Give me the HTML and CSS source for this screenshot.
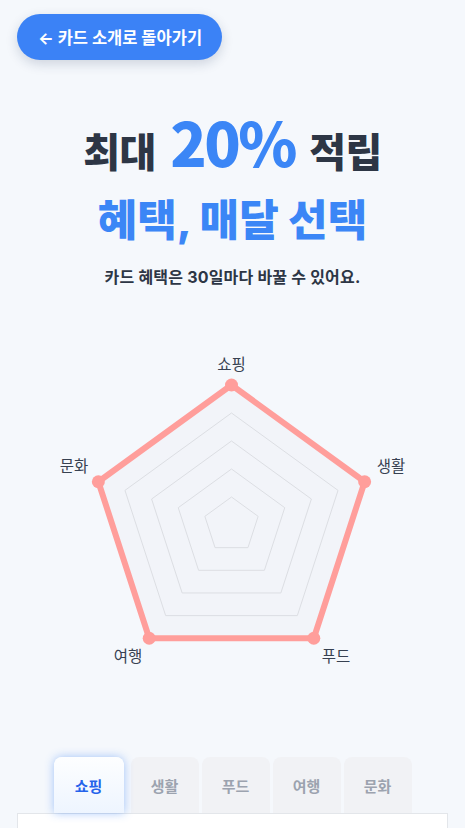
FILE: index.html
```html
<!DOCTYPE html>
<html lang="ko">
<head>
<meta charset="utf-8">
<link rel="stylesheet" href="styles.css">
</head>
<body>
<div class="page">
  <div class="top">
    <button class="back">← 카드 소개로 돌아가기</button>
  </div>
  <section class="hero">
    <h1 class="title">최대 <span class="pct">20%</span> 적립</h1>
    <h2 class="sub">혜택, 매달 선택</h2>
    <p class="desc">카드 혜택은 30일마다 바꿀 수 있어요.</p>
  </section>
  <div class="chart">
    <svg class="radar" width="465" height="360" viewBox="0 0 465 360">
      <polygon class="ring outer" points="231.5,46 364.65,142.74 313.79,299.26 149.21,299.26 98.35,142.74"/>
      <polygon class="ring" points="231.5,74 338.02,151.39 297.33,276.61 165.67,276.61 124.98,151.39"/>
      <polygon class="ring" points="231.5,102 311.39,160.04 280.87,253.96 182.13,253.96 151.61,160.04"/>
      <polygon class="ring" points="231.5,130 284.76,168.70 264.42,231.30 198.58,231.30 178.24,168.70"/>
      <polygon class="ring" points="231.5,158 258.13,177.35 247.96,208.65 215.04,208.65 204.87,177.35"/>
      <polygon class="data" points="231.5,46 364.65,142.74 313.79,299.26 149.21,299.26 98.35,142.74"/>
      <circle class="dot" cx="231.5" cy="46" r="6.5"/>
      <circle class="dot" cx="364.65" cy="142.74" r="6.5"/>
      <circle class="dot" cx="313.79" cy="299.26" r="6.5"/>
      <circle class="dot" cx="149.21" cy="299.26" r="6.5"/>
      <circle class="dot" cx="98.35" cy="142.74" r="6.5"/>
      <text class="lbl" x="231.5" y="31">쇼핑</text>
      <text class="lbl" x="391" y="133">생활</text>
      <text class="lbl" x="336" y="323">푸드</text>
      <text class="lbl" x="128" y="323">여행</text>
      <text class="lbl" x="74" y="133">문화</text>
    </svg>
  </div>
  <div class="tabs">
    <div class="tab active">쇼핑</div>
    <div class="tab">생활</div>
    <div class="tab">푸드</div>
    <div class="tab">여행</div>
    <div class="tab">문화</div>
  </div>
  <div class="panel"></div>
</div>
</body>
</html>
```

FILE: styles.css
```css
* { box-sizing: border-box; }
html, body { margin: 0; padding: 0; }
body {
  background: #f5f8fc;
  font-family: Inter, "Noto Sans CJK KR", sans-serif;
  color: #333d4b;
  width: 465px;
  height: 828px;
  overflow: hidden;
}
.page { padding: 14px 17px 0; }
.top { display: flex; }
.back {
  height: 46px;
  padding: 0 20px 0 21px;
  border: none;
  border-radius: 23px;
  background: #3b82f6;
  color: #fff;
  font-family: Inter, "Noto Sans CJK KR", sans-serif;
  font-size: 16.5px;
  font-weight: 700;
  box-shadow: 0 4px 12px rgba(30, 50, 90, 0.18);
}
.hero { text-align: center; margin-top: 51px; }
.title {
  margin: 0;
  font-size: 40px;
  font-weight: 800;
  line-height: 60px;
  color: #2d3645;
  letter-spacing: -0.5px;
  word-spacing: 6px;
}
.pct {
  font-family: "Noto Sans CJK KR", sans-serif;
  font-size: 60px;
  color: #3b86f6;
  letter-spacing: -2.5px;
}
.sub {
  margin: 12px 0 0;
  font-size: 43px;
  line-height: 50px;
  font-weight: 800;
  color: #3b86f6;
  letter-spacing: 0;
}
.desc {
  margin: 21px 0 0;
  font-size: 16px;
  line-height: 22px;
  font-weight: 700;
  color: #2d3645;
  letter-spacing: 0.2px;
}
.chart { margin: 51px -17px 0; height: 360px; }
.radar { display: block; }
.ring { fill: none; stroke: #dcdee3; stroke-width: 1; }
.ring.outer { fill: #f2f4f9; }
.data { fill: none; stroke: #ff9e9b; stroke-width: 6; stroke-linejoin: round; }
.dot { fill: #ff9e9b; }
.lbl {
  font-family: Inter, "Noto Sans CJK KR", sans-serif;
  font-size: 15.5px;
  fill: #374151;
  text-anchor: middle;
}
.tabs {
  display: flex;
  justify-content: center;
  gap: 3px;
  margin-top: 58px;
}
.tab {
  height: 56px;
  width: 68px;
  display: flex;
  align-items: center;
  justify-content: center;
  background: #f1f2f5;
  border-radius: 8px 8px 0 0;
  font-size: 15px;
  font-weight: 700;
  color: #9ca3af;
}
.tab.active {
  width: 70px;
  margin-right: 4px;
  background: linear-gradient(#fdfeff, #eef5ff);
  color: #2563eb;
  box-shadow: 0 0 10px rgba(59, 130, 246, 0.45);
  position: relative;
  z-index: 1;
}
.panel {
  height: 40px;
  background: #fff;
  border: 1px solid #e3e6ea;
}
```
